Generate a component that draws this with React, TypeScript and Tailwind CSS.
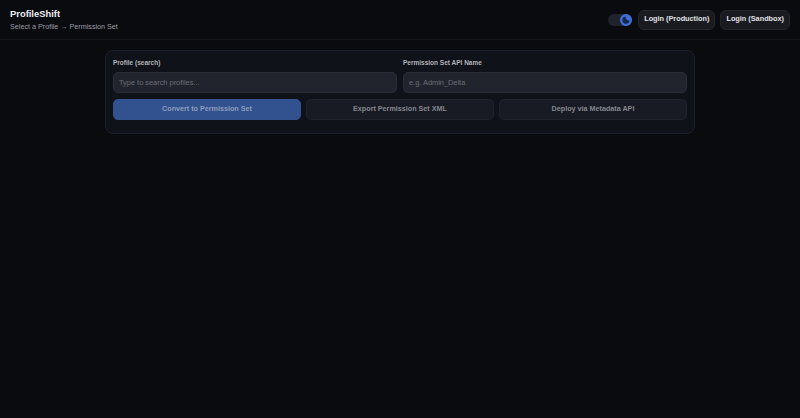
const font = { fontFamily: '"Liberation Sans", Arial, sans-serif' };

function HeaderButton({ label }: { label: string }) {
  return (
    <button className="h-[20px] px-[5px] rounded-[6px] border border-[#24272e] bg-[#191b21] text-[7.3px] font-bold text-[#e0e1e4] whitespace-nowrap">
      {label}
    </button>
  );
}

function Field({ label, placeholder }: { label: string; placeholder: string }) {
  return (
    <div className="flex-1">
      <label className="block h-[9px] mb-[1px] text-[6.5px] leading-[9px] font-bold text-[#b0b2b9]">
        {label}
      </label>
      <input
        placeholder={placeholder}
        className="w-full h-[21px] px-[5px] rounded-[5px] border border-[#2a2d37] bg-[#22242d] text-[7.4px] text-[#c7c8cc] placeholder:text-[#6c6e76] outline-none"
      />
    </div>
  );
}

function ActionButton({ label, primary }: { label: string; primary?: boolean }) {
  return (
    <button
      disabled
      className={
        primary
          ? "flex-1 h-[21px] rounded-[5px] border border-[#31528f] bg-[#31528f] text-[7.2px] font-bold text-[#8f9cb8]"
          : "flex-1 h-[21px] rounded-[5px] border border-[#20232c] bg-[#181b24] text-[7.2px] font-bold text-[#85878e]"
      }
    >
      {label}
    </button>
  );
}

export default function App() {
  return (
    <div className="w-[800px] h-[418px] overflow-hidden bg-[#0a0b0e]" style={font}>
      <header className="h-[40px] px-[10px] flex items-center justify-between border-b border-[#16181d]">
        <div>
          <h1 className="text-[9.4px] leading-[13px] font-bold text-[#eeeff1]">ProfileShift</h1>
          <p className="mt-[1px] text-[7.2px] leading-[11px] text-[#9b9da5]">
            Select a Profile → Permission Set
          </p>
        </div>
        <div className="flex items-center gap-[5px]">
          <div className="relative w-[24px] h-[12px] mr-[1px] rounded-full bg-[#20232b]">
            <span className="absolute right-0 top-0 w-[12px] h-[12px] rounded-full bg-[#3f6fd8] flex items-center justify-center">
              <svg viewBox="0 0 12 12" className="w-[12px] h-[12px]">
                <path d="M5.5 2.5 A3.6 3.6 0 1 0 9.5 6.5 A4 4 0 0 1 5.5 2.5 Z" fill="#14284f" />
              </svg>
            </span>
          </div>
          <HeaderButton label="Login (Production)" />
          <HeaderButton label="Login (Sandbox)" />
        </div>
      </header>
      <main className="w-[590px] mx-auto mt-[10px] p-[7px] pb-[13px] rounded-[8px] border border-[#1c2029] bg-[#10121a]">
        <div className="flex gap-[6px]">
          <Field label="Profile (search)" placeholder="Type to search profiles..." />
          <Field label="Permission Set API Name" placeholder="e.g. Admin_Delta" />
        </div>
        <div className="flex gap-[5px] mt-[6px]">
          <ActionButton label="Convert to Permission Set" primary />
          <ActionButton label="Export Permission Set XML" />
          <ActionButton label="Deploy via Metadata API" />
        </div>
      </main>
    </div>
  );
}
